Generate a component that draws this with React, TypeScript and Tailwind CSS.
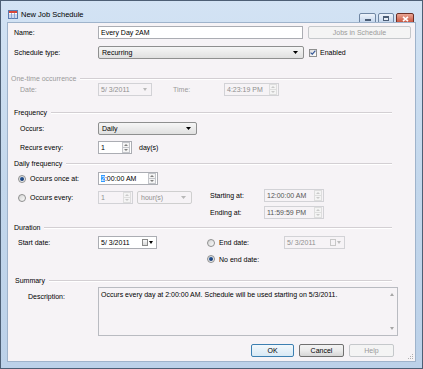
const Tri = ({ up, c = "#000", w = 5, h = 3 }: { up?: boolean; c?: string; w?: number; h?: number }) => (
  <svg width={w} height={h} viewBox="0 0 5 3" preserveAspectRatio="none" className="shrink-0">
    <path d={up ? "M0 3 L2.5 0 L5 3Z" : "M0 0 L5 0 L2.5 3Z"} fill={c} />
  </svg>
);

const Spin = ({ off }: { off?: boolean }) => (
  <div className={`ml-auto flex h-[11px] w-[8px] shrink-0 flex-col border bg-[#f4f4f4] ${off ? "border-[#dedede]" : "border-[#c3c5ca]"}`}>
    <div className="flex flex-1 items-center justify-center">
      <Tri up w={4} h={2} c={off ? "#cacaca" : "#808080"} />
    </div>
    <div className={`flex flex-1 items-center justify-center border-t ${off ? "border-[#dedede]" : "border-[#c3c5ca]"}`}>
      <Tri w={4} h={2} c={off ? "#cacaca" : "#808080"} />
    </div>
  </div>
);

const Field = ({ w, off, children }: { w: string; off?: boolean; children: React.ReactNode }) => (
  <div className={`flex h-[13px] shrink-0 items-center border pl-[2px] pr-[1px] ${off ? "border-[#d2d2d6] text-[#8f8f8f]" : "border-[#abadb3] bg-white"} ${w}`}>
    {children}
  </div>
);

const Combo = ({ w, text, off }: { w: string; text: string; off?: boolean }) => (
  <div className={`flex h-[13px] shrink-0 items-center rounded-[2px] border pl-[3px] pr-[5px] ${off ? "border-[#cfcfcf] text-[#8f8f8f]" : "border-[#8e8f8f] bg-gradient-to-b from-[#f6f6f6] to-[#e0e0e0]"} ${w}`}>
    <span>{text}</span>
    <span className="ml-auto flex">
      <Tri c={off ? "#b8b8b8" : "#000"} />
    </span>
  </div>
);

const Btn = ({ w, text, def, off }: { w: string; text: string; def?: boolean; off?: boolean }) => (
  <div
    className={`flex h-[13px] shrink-0 items-center justify-center rounded-[2px] border ${w} ${
      off
        ? "border-[#c5c8cb] bg-[#f4f4f4] text-[#9a9a9a]"
        : def
        ? "border-[#3c7fb1] bg-gradient-to-b from-[#f2f8fc] to-[#d8e9f5]"
        : "border-[#707070] bg-gradient-to-b from-[#f3f3f3] via-[#ebebeb] to-[#d6d6d6]"
    }`}
  >
    {text}
  </div>
);

const Radio = ({ on }: { on?: boolean }) => (
  <div className="flex size-[8px] shrink-0 items-center justify-center rounded-full border border-[#8e8f8f] bg-gradient-to-br from-[#d4d4d4] to-[#fbfbfb]">
    {on && <div className="size-[4px] rounded-full bg-gradient-to-br from-[#2c62a8] to-[#0f2f66]" />}
  </div>
);

const Group = ({ label, off, pl }: { label: string; off?: boolean; pl: string }) => (
  <div className={`flex h-[9px] w-[384px] shrink-0 items-center ${pl}`}>
    <span className={off ? "text-[#9a9a9a]" : ""}>{label}</span>
    <div className="ml-[4px] h-[2px] flex-1 border-t border-b border-t-[#d3cfd3] border-b-white" />
  </div>
);

const CalIcon = () => (
  <svg width="10" height="9" viewBox="0 0 10 9" className="shrink-0">
    <rect x="0.5" y="0.5" width="9" height="8" fill="#fff" stroke="#5a7bb0" />
    <rect x="1" y="1" width="8" height="2" fill="#d9473a" />
    <path d="M1 5 H9 M1 7 H9 M3.5 3 V8.5 M6.5 3 V8.5" stroke="#7d9cd0" strokeWidth="0.8" />
  </svg>
);

export default function App() {
  return (
    <div className="h-[369px] w-[423px] bg-white font-['Liberation_Sans',Arial,sans-serif] text-[7px] leading-none text-black">
      <div className="flex h-full w-full flex-col border border-[#4d5f75] bg-gradient-to-b from-[#d3e3f4] via-[#c3d7ec] to-[#bcd1e9] px-[6px] pb-[6px]">
        {/* title bar */}
        <div className="flex h-[21px] shrink-0 items-center pt-[6px]">
          <div className="ml-[1px]">
            <CalIcon />
          </div>
          <span className="ml-[3px] text-[7.5px]">New Job Schedule</span>
          <div className="ml-auto flex items-center gap-[2px] self-start pt-[6px] pr-[2px]">
            <div className="flex h-[11px] w-[17px] items-center justify-center rounded-[2px] border border-[#6f86a3] bg-gradient-to-b from-[#eef4fb] to-[#bfd2ea]">
              <div className="mt-[3px] h-[2px] w-[6px] border border-[#4b5d75] bg-white" />
            </div>
            <div className="flex h-[11px] w-[16px] items-center justify-center rounded-[2px] border border-[#6f86a3] bg-gradient-to-b from-[#eef4fb] to-[#bfd2ea]">
              <div className="h-[5px] w-[6px] border border-[#4b5d75] border-t-2 bg-[#e8eef6]" />
            </div>
            <div className="flex h-[11px] w-[18px] items-center justify-center rounded-[2px] border border-[#6b2f26] bg-gradient-to-b from-[#eaa695] to-[#c44b34]">
              <svg width="7" height="6" viewBox="0 0 7 6">
                <path d="M1 0.8 L6 5.2 M6 0.8 L1 5.2" stroke="#fff" strokeWidth="1.6" />
              </svg>
            </div>
          </div>
        </div>

        {/* client area */}
        <div className="relative flex flex-1 flex-col border border-[#9fb3cb] bg-[#f6f3f6]">
          {/* Name */}
          <div className="mt-[3px] flex h-[13px] items-center">
            <div className="w-[90px] shrink-0 pl-[6px]">Name:</div>
            <Field w="w-[205px]">Every Day 2AM</Field>
            <div className="ml-[5px]">
              <Btn w="w-[103px]" text="Jobs in Schedule" off />
            </div>
          </div>

          {/* Schedule type */}
          <div className="mt-[7px] flex h-[13px] items-center">
            <div className="w-[90px] shrink-0 pl-[6px]">Schedule type:</div>
            <Combo w="w-[206px]" text="Recurring" />
            <div className="ml-[5px] flex size-[8px] items-center justify-center border border-[#8e8f8f] bg-gradient-to-br from-[#dcdcdc] to-white">
              <svg width="6" height="5" viewBox="0 0 6 5">
                <path d="M0.6 2.6 L2.3 4.2 L5.4 0.6" fill="none" stroke="#3a5a9a" strokeWidth="1.2" />
              </svg>
            </div>
            <span className="ml-[3px]">Enabled</span>
          </div>

          {/* One-time occurrence */}
          <div className="mt-[15px]">
            <Group label="One-time occurrence" off pl="pl-[3px]" />
          </div>
          <div className="flex h-[13px] items-center text-[#9a9a9a]">
            <div className="w-[90px] shrink-0 pl-[12px]">Date:</div>
            <Field w="w-[54px]" off>
              <span>5/ 3/2011</span>
              <span className="ml-auto mr-[3px] flex">
                <Tri c="#b8b8b8" w={4} />
              </span>
            </Field>
            <div className="w-[72px] shrink-0 pl-[21px]">Time:</div>
            <Field w="w-[55px]" off>
              <span>4:23:19 PM</span>
              <Spin off />
            </Field>
          </div>

          {/* Frequency */}
          <div className="mt-[12px]">
            <Group label="Frequency" pl="pl-[6px]" />
          </div>
          <div className="mt-[5px] flex h-[13px] items-center">
            <div className="w-[90px] shrink-0 pl-[12px]">Occurs:</div>
            <Combo w="w-[99px]" text="Daily" />
          </div>
          <div className="mt-[6px] flex h-[13px] items-center">
            <div className="w-[90px] shrink-0 pl-[12px]">Recurs every:</div>
            <Field w="w-[34px]">
              <span>1</span>
              <Spin />
            </Field>
            <span className="ml-[7px]">day(s)</span>
          </div>

          {/* Daily frequency */}
          <div className="mt-[5px]">
            <Group label="Daily frequency" pl="pl-[6px]" />
          </div>
          <div className="mt-[4px] flex h-[47px] items-start">
            <div className="flex w-[202px] shrink-0 flex-col">
              <div className="flex h-[13px] items-center">
                <div className="flex w-[90px] shrink-0 items-center pl-[10px]">
                  <Radio on />
                  <span className="ml-[4px]">Occurs once at:</span>
                </div>
                <Field w="w-[60px]">
                  <span className="bg-[#3399ff] text-white">2</span>
                  <span>:00:00 AM</span>
                  <Spin />
                </Field>
              </div>
              <div className="mt-[6px] flex h-[13px] items-center">
                <div className="flex w-[90px] shrink-0 items-center pl-[10px]">
                  <Radio />
                  <span className="ml-[4px]">Occurs every:</span>
                </div>
                <Field w="w-[35px]" off>
                  <span>1</span>
                  <Spin off />
                </Field>
                <div className="ml-[4px]">
                  <Combo w="w-[55px]" text="hour(s)" off />
                </div>
              </div>
            </div>
            <div className="mt-[17px] flex flex-col">
              <div className="flex h-[13px] items-center">
                <div className="w-[54px] shrink-0">Starting at:</div>
                <Field w="w-[60px]" off>
                  <span className="text-[#555]">12:00:00 AM</span>
                  <Spin off />
                </Field>
              </div>
              <div className="mt-[4px] flex h-[13px] items-center">
                <div className="w-[54px] shrink-0">Ending at:</div>
                <Field w="w-[60px]" off>
                  <span className="text-[#555]">11:59:59 PM</span>
                  <Spin off />
                </Field>
              </div>
            </div>
          </div>

          {/* Duration */}
          <div className="mt-[4px]">
            <Group label="Duration" pl="pl-[6px]" />
          </div>
          <div className="mt-[4px] flex h-[13px] items-center">
            <div className="w-[90px] shrink-0 pl-[10px]">Start date:</div>
            <Field w="w-[59px]">
              <span>5/ 3/2011</span>
              <span className="ml-auto mr-[2px] flex items-center gap-[1px]">
                <span className="h-[7px] w-[6px] border border-[#8a8a8a] bg-gradient-to-b from-[#fafafa] to-[#d8d8d8]" />
                <Tri w={4} />
              </span>
            </Field>
            <div className="ml-[50px] flex w-[77px] shrink-0 items-center">
              <Radio />
              <span className="ml-[4px]">End date:</span>
            </div>
            <Field w="w-[61px]" off>
              <span>5/ 3/2011</span>
              <span className="ml-auto mr-[2px] flex items-center gap-[1px]">
                <span className="h-[7px] w-[6px] border border-[#c8c8c8]" />
                <Tri w={4} c="#bdbdbd" />
              </span>
            </Field>
          </div>
          <div className="mt-[5px] flex h-[10px] items-center pl-[199px]">
            <Radio on />
            <span className="ml-[4px]">No end date:</span>
          </div>

          {/* Summary */}
          <div className="mt-[12px]">
            <Group label="Summary" pl="pl-[7px]" />
          </div>
          <div className="mt-[2px] flex h-[49px] items-start">
            <div className="w-[90px] shrink-0 pl-[20px] pt-[6px]">Description:</div>
            <div className="flex h-[49px] w-[300px] shrink-0 border border-[#b9bbc1]">
              <div className="flex-1 pl-[2px] pt-[3px]">
                Occurs every day at 2:00:00 AM. Schedule will be used starting on 5/3/2011.
              </div>
              <div className="flex w-[11px] shrink-0 flex-col items-center justify-between py-[5px]">
                <Tri up w={4} c="#a6a6a6" />
                <Tri w={4} c="#a6a6a6" />
              </div>
            </div>
          </div>

          {/* Buttons */}
          <div className="mt-[8px] flex h-[13px] items-center justify-end gap-[5px] pr-[21px]">
            <Btn w="w-[43px]" text="OK" def />
            <Btn w="w-[45px]" text="Cancel" />
            <Btn w="w-[45px]" text="Help" off />
          </div>

          <svg width="6" height="6" viewBox="0 0 6 6" className="absolute bottom-[1px] right-[1px]">
            <rect x="4" y="0" width="1" height="1" fill="#b0b0b0" />
            <rect x="2" y="2" width="1" height="1" fill="#b0b0b0" />
            <rect x="4" y="2" width="1" height="1" fill="#b0b0b0" />
            <rect x="0" y="4" width="1" height="1" fill="#b0b0b0" />
            <rect x="2" y="4" width="1" height="1" fill="#b0b0b0" />
            <rect x="4" y="4" width="1" height="1" fill="#b0b0b0" />
          </svg>
        </div>
      </div>
    </div>
  );
}
